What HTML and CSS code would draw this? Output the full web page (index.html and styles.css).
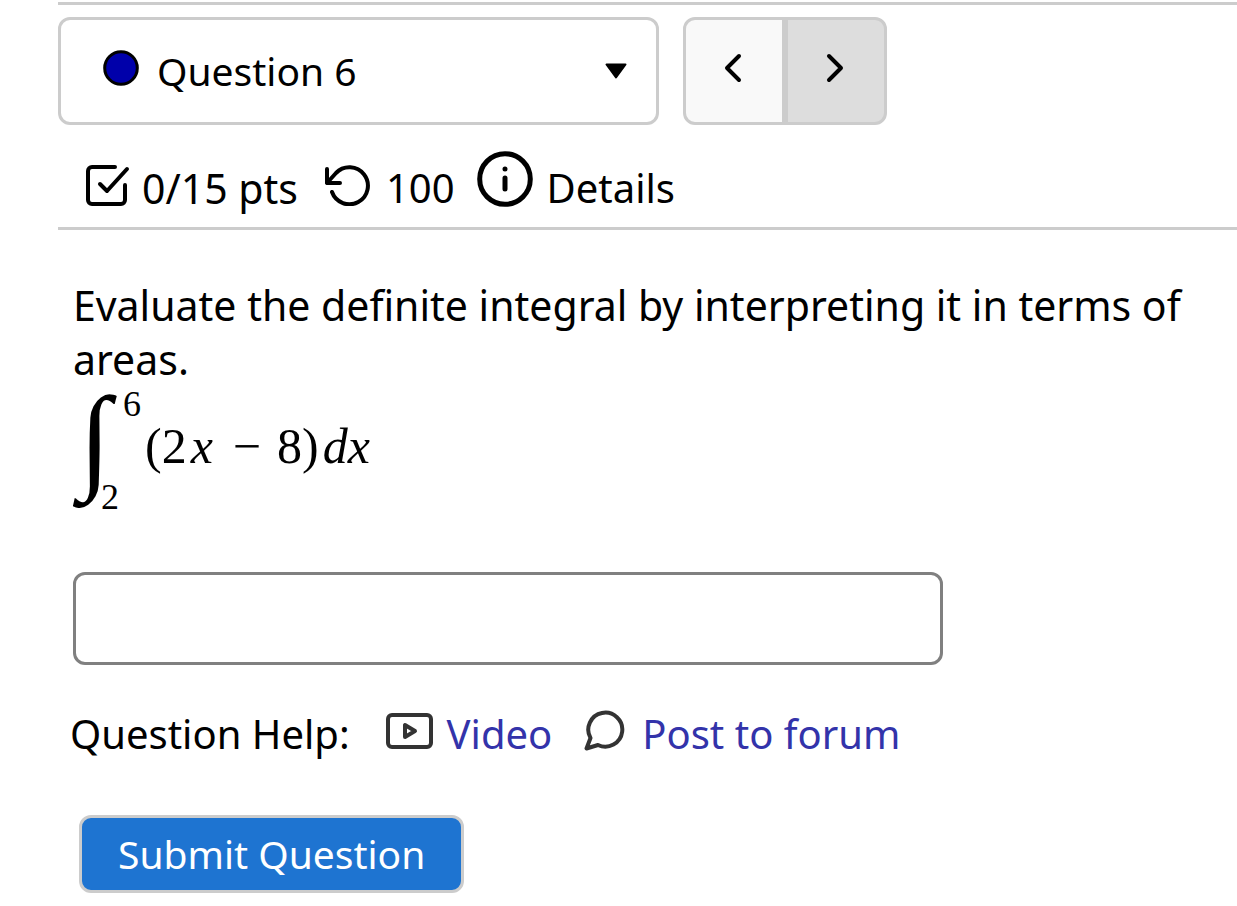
FILE: index.html
```
<!DOCTYPE html>
<html lang="en">
<head>
  <meta charset="UTF-8">
  <meta name="viewport" content="width=device-width, initial-scale=1">
  <title>Question 6</title>
  <link rel="stylesheet" href="styles.css">
</head>
<body>
  <header class="question-header">
    <div class="nav-row">
      <div class="question-picker">
        <svg class="status-dot" viewBox="0 0 36 36" aria-hidden="true"><circle cx="18" cy="18" r="16.3"/></svg>
        <select class="question-select" aria-label="Select question">
          <option>Question 6</option>
        </select>
        <svg class="caret" viewBox="0 0 22 16" aria-hidden="true"><path d="M1.5 1.5h19L11 14.5z"/></svg>
      </div>
      <div class="pager">
        <button class="pager-btn prev" aria-label="Previous question">
          <svg class="chevron" viewBox="0 0 18 30" aria-hidden="true"><path d="M15 3 3 15l12 12"/></svg>
        </button>
        <button class="pager-btn next" aria-label="Next question">
          <svg class="chevron" viewBox="0 0 18 30" aria-hidden="true"><path d="M3 3l12 12L3 27"/></svg>
        </button>
      </div>
    </div>
    <div class="info-row">
      <svg class="icon-points" viewBox="0 0 44 42" aria-hidden="true"><path d="M29 3H6a4 4 0 0 0-4 4v29a4 4 0 0 0 4 4h29a4 4 0 0 0 4-4V21M14 20l7 7L41 5"/></svg>
      <span class="points">0/15 pts</span>
      <svg class="icon-retry" viewBox="0 0 46 42" aria-hidden="true"><path d="M3 5v14h13M3 19 12 9A18.500 18.500 0 1 1 8 28"/></svg>
      <span class="attempts">100</span>
      <button class="details-btn">
        <svg class="icon-info" viewBox="0 0 56 56" aria-hidden="true"><circle cx="28" cy="28" r="25.300"/><path d="M28 27v11M28 18v.1"/></svg>
        Details
      </button>
    </div>
  </header>

  <main class="question">
    <label class="prompt" for="answer">Evaluate the definite integral by interpreting it in terms of areas.</label>
    <div class="formula">
      <span class="integral">∫</span>
      <span class="limits"><span class="upper">6</span><span class="lower">2</span></span>
      <span class="integrand">(2<i>x</i><span class="minus">−</span>8)<i>dx</i></span>
    </div>
    <input class="answer" id="answer" type="text" autocomplete="off">
    <div class="help-row">
      <span>Question Help:</span>
      <a class="help-link video" href="#">
        <svg class="icon-video" viewBox="0 0 48 38" aria-hidden="true"><rect x="2" y="3" width="43" height="32" rx="4"/><path d="M19 13v12l10-6z"/></svg>
        Video
      </a>
      <a class="help-link forum" href="#">
        <svg class="icon-forum" viewBox="0 0 42 42" aria-hidden="true"><path d="M2.500 38.500 6.500 28A17 17 0 1 1 14 35z"/></svg>
        Post to forum
      </a>
    </div>
    <button class="submit">Submit Question</button>
  </main>
</body>
</html>
```
FILE: styles.css
```
* {
  box-sizing: border-box;
}
body {
  margin: 0;
  padding: 2px 0 12px 58px;
  background: #fff;
  color: #000;
  font-family: "Noto Sans", sans-serif;
  font-size: 40px;
  line-height: 54px;
}
button, select, input {
  font: inherit;
  color: inherit;
}
svg {
  flex: none;
  fill: none;
  stroke: #000;
  stroke-width: 4;
  stroke-linecap: round;
  stroke-linejoin: round;
}

.question-header {
  border-top: 3px solid #ccc;
  border-bottom: 3px solid #ccc;
  padding-top: 12px;
}
.nav-row {
  display: flex;
  gap: 24px;
}
.question-picker {
  display: flex;
  align-items: center;
  width: 601px;
  height: 108px;
  padding: 0 29px 0 42px;
  border: 3px solid #ccc;
  border-radius: 12px;
}
.status-dot {
  width: 36px;
  height: 36px;
  margin: 0 18px 6px 0;
}
.status-dot circle {
  fill: #00a;
  stroke-width: 3;
}
.question-select {
  flex: 1;
  padding: 0;
  border: 0;
  background: none;
  font-size: 39px;
  appearance: none;
}
.caret {
  width: 22px;
  height: 16px;
}
.caret path {
  fill: #000;
  stroke-width: 2;
}
.pager {
  display: flex;
}
.pager-btn {
  display: flex;
  align-items: center;
  justify-content: center;
  width: 102px;
  padding: 0 2px 6px 0;
  border: 3px solid #ccc;
  background: #f9f9f9;
}
.prev {
  border-radius: 12px 0 0 12px;
}
.next {
  border-radius: 0 12px 12px 0;
  background: #ddd;
}
.chevron {
  width: 18px;
  height: 30px;
}

.info-row {
  display: flex;
  align-items: flex-end;
  height: 102px;
  padding: 0 0 12px 28px;
}
.points {
  font-size: 41px;
}
.icon-points {
  width: 44px;
  height: 42px;
  margin: 0 12px 9px 0;
}
.icon-retry {
  width: 46px;
  height: 42px;
  margin: 0 16px 9px 26px;
}
.details-btn {
  display: flex;
  align-items: flex-end;
  gap: 14px;
  margin-left: 22px;
  padding: 0;
  border: 0;
  background: none;
}
.icon-info {
  width: 56px;
  height: 56px;
  margin-bottom: 8px;
  stroke-width: 5;
}

.question {
  padding: 48px 32px 0 15px;
}
.prompt {
  display: block;
  font-size: 41px;
}
.formula {
  display: flex;
  align-items: center;
  height: 129px;
  padding-left: 6px;
  font-family: "Liberation Serif", serif;
  font-size: 50px;
}
.integral {
  width: 22px;
  font-size: 116px;
  font-style: italic;
  line-height: 116px;
  padding-bottom: 26px;
}
.limits {
  display: flex;
  flex-direction: column;
  justify-content: space-between;
  align-self: stretch;
  width: 44px;
  font-size: 36px;
  line-height: 36px;
}
.upper {
  padding-left: 22px;
}
.integrand {
  padding-bottom: 10px;
}
.integrand i {
  margin: 0 4px;
}
.minus {
  margin: 0 16px;
}
.answer {
  display: block;
  width: 870px;
  max-width: 100%;
  height: 93px;
  margin-top: 57px;
  padding: 0 18px;
  border: 3px solid #808080;
  border-radius: 12px;
}
.help-row {
  display: flex;
  margin: 42px 0 54px -3px;
}
.help-link {
  display: flex;
  align-items: center;
  color: #33a;
  text-decoration: none;
}
.help-link svg {
  stroke: #333;
}
.video {
  gap: 13px;
  margin-left: 36px;
}
.icon-video {
  width: 48px;
  height: 38px;
  margin-bottom: 6px;
}
.forum {
  gap: 16px;
  margin-left: 32px;
}
.icon-forum {
  width: 42px;
  height: 42px;
  margin-bottom: 6px;
}
.submit {
  height: 78px;
  margin-left: 6px;
  padding: 0 36px;
  border: 3px solid #ccc;
  border-radius: 12px;
  background: #1e74d1;
  color: #fff;
  font-size: 39px;
}
```
